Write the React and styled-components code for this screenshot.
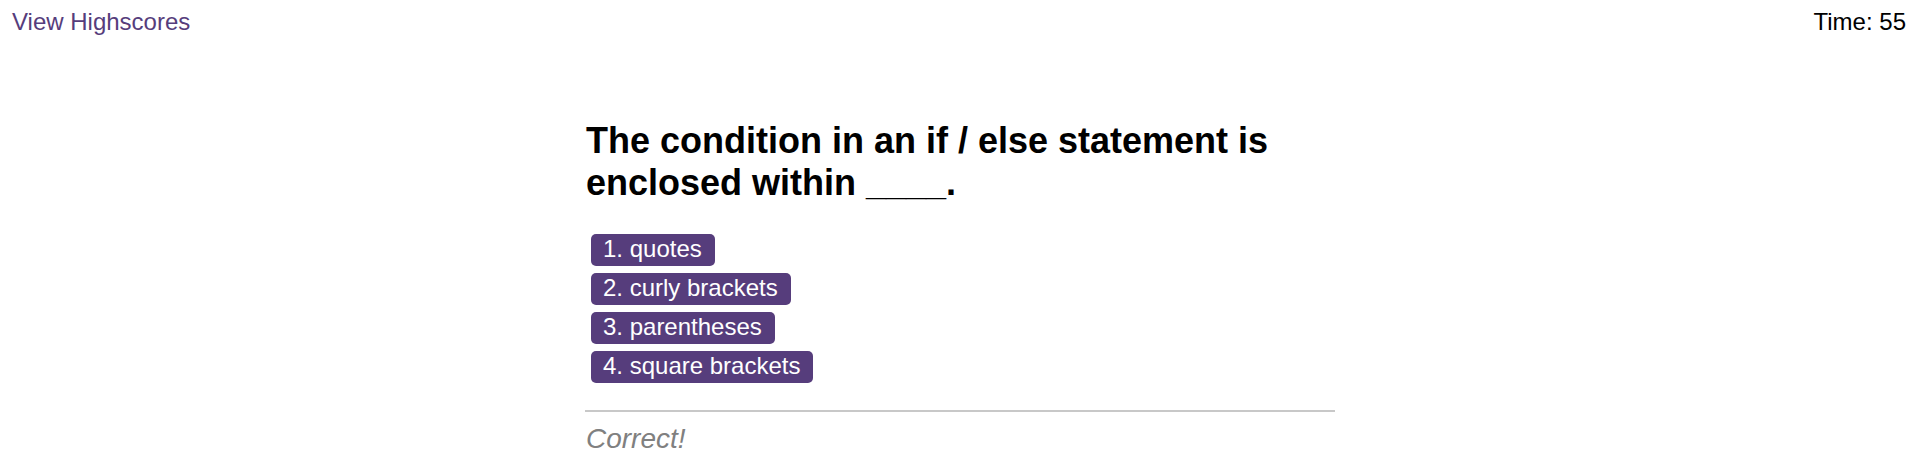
import React from "react";
import styled, { createGlobalStyle } from "styled-components";

const Global = createGlobalStyle`
  html, body { margin: 0; padding: 0; background: #ffffff; }
  body { font-family: "Liberation Sans", Arial, sans-serif; font-size: 24px; color: #000; }
`;

const Header = styled.header`
  display: flex;
  justify-content: space-between;
  align-items: flex-start;
  padding: 8px 1px 0 12px;
  line-height: normal;
`;

const HighscoreLink = styled.a`
  color: #563d7c;
  text-decoration: none;
  cursor: pointer;
`;

const Timer = styled.div`
  color: #000;
`;

const Stage = styled.main`
  display: flex;
  justify-content: center;
  padding-left: 13px;
  margin-top: 84px;
`;

const Card = styled.section`
  width: 750px;
  display: flex;
  flex-direction: column;
`;

const Question = styled.h2`
  margin: 0;
  font-size: 36px;
  font-weight: 700;
  line-height: normal;
  padding-left: 1px;
`;

const Choices = styled.ol`
  list-style: none;
  margin: 30px 0 0 6px;
  padding: 0;
  display: flex;
  flex-direction: column;
  align-items: flex-start;
  gap: 7px;
`;

const ChoiceButton = styled.button`
  font-family: "Liberation Sans", Arial, sans-serif;
  font-size: 24px;
  color: #ffffff;
  background: #563d7c;
  border: none;
  border-radius: 5px;
  height: 32px;
  line-height: 30px;
  padding: 0 13px 2px 12px;
  cursor: pointer;
  white-space: nowrap;
`;

const Divider = styled.hr`
  margin: 27px 0 0;
  border: none;
  height: 2px;
  background: #c8c8c8;
`;

const Feedback = styled.p`
  margin: 11px 0 0;
  font-size: 28px;
  font-style: italic;
  color: #808080;
  line-height: normal;
  padding-left: 1px;
`;

const choices = ["quotes", "curly brackets", "parentheses", "square brackets"];

export default function App() {
  return (
    <>
      <Global />
      <Header>
        <HighscoreLink>View Highscores</HighscoreLink>
        <Timer>Time: 55</Timer>
      </Header>
      <Stage>
        <Card>
          <Question>The condition in an if / else statement is enclosed within ____.</Question>
          <Choices>
            {choices.map((c, i) => (
              <li key={c}>
                <ChoiceButton>{`${i + 1}. ${c}`}</ChoiceButton>
              </li>
            ))}
          </Choices>
          <Divider />
          <Feedback>Correct!</Feedback>
        </Card>
      </Stage>
    </>
  );
}
